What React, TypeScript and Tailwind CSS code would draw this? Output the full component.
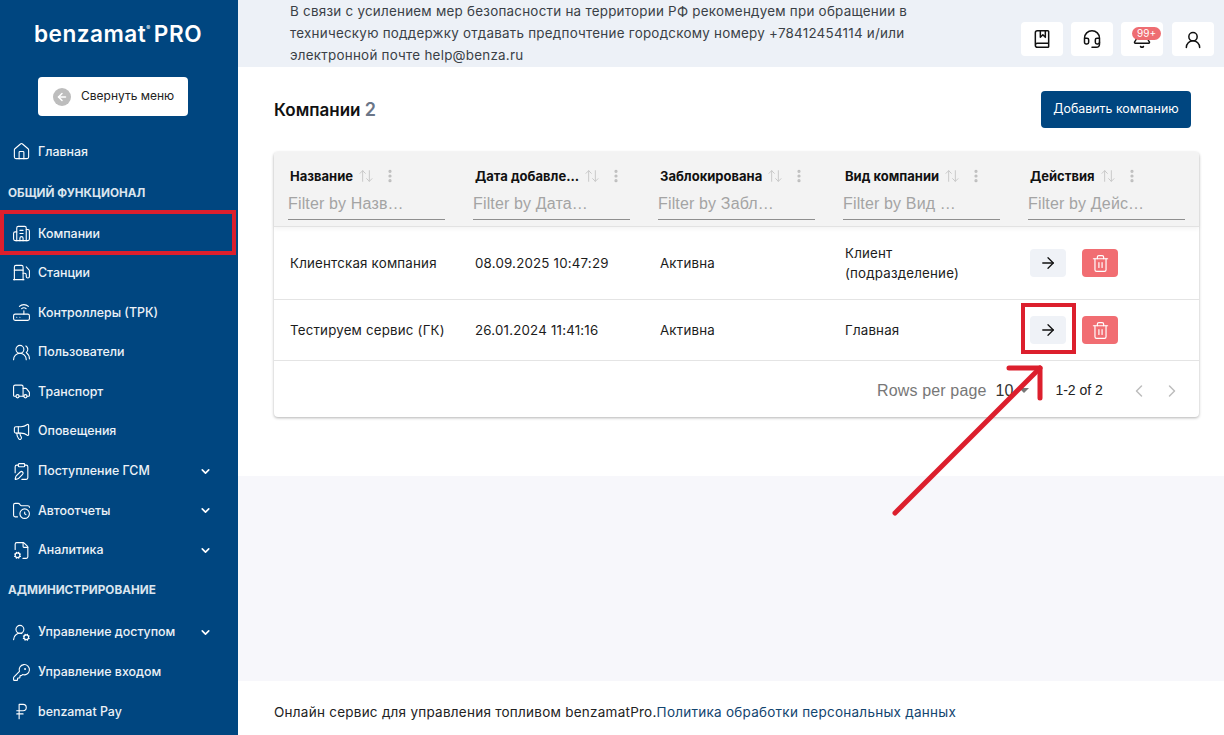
import React from "react";
import {
  Home, Building2, Fuel, Router, UsersRound, Truck, Megaphone, ClipboardPen, FolderClock, FileCog, UserRoundCog, KeyRound, RussianRuble,
  ChevronDown, ChevronLeft, ChevronRight, ArrowLeft, ArrowRight, BookMarked, Headset, Bell, UserRound, Trash2, EllipsisVertical, ArrowUpDown,
} from "lucide-react";

const F = "font-['Inter','Noto_Sans',sans-serif]";

function NavItem({ icon: I, label, chevron, y }: { icon: any; label: string; chevron?: boolean; y: string }) {
  return (
    <div className={`flex items-center pl-[12px] pr-[26px] ${y}`}>
      <I size={19} strokeWidth={1.4} className="shrink-0 text-white" />
      <span className="ml-[7px] flex-1 text-[12.4px] leading-[18px] font-medium text-[#edf2f7] whitespace-nowrap">{label}</span>
      {chevron && <ChevronDown size={13} strokeWidth={3} className="text-white" />}
    </div>
  );
}

function Section({ children, y }: { children: string; y: string }) {
  return <div className={`pl-[8px] text-[11.75px] leading-[16px] font-bold text-[#dbe5ee] whitespace-nowrap ${y}`}>{children}</div>;
}

function TopButton({ children, ml }: { children: React.ReactNode; ml: string }) {
  return <div className={`relative flex h-[34px] w-[42px] items-center justify-center rounded-[4px] bg-white ${ml}`}>{children}</div>;
}

function HeaderCell({ title }: { title: string }) {
  return (
    <div className="w-[185px] shrink-0 pl-[14px]">
      <div className="flex items-center h-[20px]">
        <span className="ml-[2px] text-[13px] font-bold text-[#111] leading-[20px] whitespace-nowrap">{title}</span>
        <ArrowUpDown size={16} strokeWidth={1.5} className="ml-[5px] text-[#c9c9c9]" />
        <EllipsisVertical size={16} strokeWidth={2.8} className="ml-[8px] text-[#bdbdbd]" />
      </div>
    </div>
  );
}

function FilterCell({ text }: { text: string }) {
  return (
    <div className="w-[185px] shrink-0 pl-[14px]">
      <div className="w-[157px] h-[28px] border-b border-[#8f8f8f] font-['Liberation_Sans',sans-serif] text-[16px] tracking-[0.15px] leading-[24px] text-[#a4a4a4] whitespace-nowrap overflow-hidden">{text}</div>
    </div>
  );
}

function Row({ cells, h, highlight }: { cells: React.ReactNode[]; h: string; highlight?: boolean }) {
  return (
    <div className={`flex items-center border-b border-[#e4e4e4] text-[13.3px] text-[#1c1c1c] ${h}`}>
      {cells.map((c, i) => (
        <div key={i} className="w-[185px] shrink-0 pl-[16px] leading-[20px] tracking-[0.2px]">{c}</div>
      ))}
      <div className="w-[185px] shrink-0 flex items-center gap-[16px] pl-[16px]">
        <div className="relative flex h-[28px] w-[36px] items-center justify-center rounded-[4px] bg-[#eff2f7]">
          <ArrowRight size={18} strokeWidth={1.7} className="text-[#111]" />
          {highlight && <div className="absolute left-[-9px] top-[-13px] h-[51px] w-[55px] border-[4px] border-[#dc1f2d]" />}
        </div>
        <div className="flex h-[28px] w-[36px] items-center justify-center rounded-[4px] bg-[#f16d72]">
          <Trash2 size={19} strokeWidth={1.5} className="text-white" />
        </div>
      </div>
    </div>
  );
}

export default function App() {
  return (
    <div className={`flex h-[735px] w-[1224px] overflow-hidden bg-white ${F}`}>
      <aside className="w-[238px] shrink-0 bg-[#004680] flex flex-col">
        <div className="mt-[20px] flex justify-center pr-[2px] text-[22.6px] leading-[28px] font-semibold text-white tracking-[0.5px]">
          benzamat<span className="text-[6px] leading-[16px]">®</span><span className="ml-[3px]">PRO</span>
        </div>
        <div className="mt-[29px] ml-[38px] flex h-[39px] w-[150px] items-center rounded-[4px] bg-white">
          <span className="ml-[15px] flex h-[18px] w-[18px] items-center justify-center rounded-full bg-[#bdbdbd]">
            <ArrowLeft size={12} strokeWidth={3} className="text-white" />
          </span>
          <span className="ml-[10px] -mt-[2px] text-[12px] text-[#222] whitespace-nowrap">Свернуть меню</span>
        </div>
        <NavItem icon={Home} label="Главная" y="mt-[26px]" />
        <Section y="mt-[24px]">ОБЩИЙ ФУНКЦИОНАЛ</Section>
        <div className="relative mt-[23px]">
          <NavItem icon={Building2} label="Компании" y="" />
          <div className="absolute left-0 top-[-14px] h-[45px] w-[236px] border-[4px] border-[#dc1f2d]" />
        </div>
        <NavItem icon={Fuel} label="Станции" y="mt-[20px]" />
        <NavItem icon={Router} label="Контроллеры (ТРК)" y="mt-[21px]" />
        <NavItem icon={UsersRound} label="Пользователи" y="mt-[20.67px]" />
        <NavItem icon={Truck} label="Транспорт" y="mt-[20.67px]" />
        <NavItem icon={Megaphone} label="Оповещения" y="mt-[20.67px]" />
        <NavItem icon={ClipboardPen} label="Поступление ГСМ" chevron y="mt-[20.67px]" />
        <NavItem icon={FolderClock} label="Автоотчеты" chevron y="mt-[20.67px]" />
        <NavItem icon={FileCog} label="Аналитика" chevron y="mt-[20.67px]" />
        <Section y="mt-[22px]">АДМИНИСТРИРОВАНИЕ</Section>
        <NavItem icon={UserRoundCog} label="Управление доступом" chevron y="mt-[25px]" />
        <NavItem icon={KeyRound} label="Управление входом" y="mt-[20.67px]" />
        <NavItem icon={RussianRuble} label="benzamat Pay" y="mt-[20.67px]" />
      </aside>

      <main className="relative flex-1 flex flex-col">
        <header className="h-[67px] shrink-0 bg-[#edf1f7] flex items-start pl-[52px]">
          <p className="w-[680px] text-[13.4px] leading-[22px] text-[#3a3f46] tracking-[0.25px]">
            В связи с усилением мер безопасности на территории РФ рекомендуем при обращении в техническую поддержку отдавать предпочтение городскому номеру +78412454114 и/или электронной почте help@benza.ru
          </p>
          <div className="ml-[51px] mt-[22px] flex">
            <TopButton ml=""><BookMarked size={20} strokeWidth={1.8} className="text-[#111]" /></TopButton>
            <TopButton ml="ml-[8px]"><Headset size={20} strokeWidth={1.8} className="text-[#111]" /></TopButton>
            <TopButton ml="ml-[8px]">
              <Bell size={20} strokeWidth={1.8} className="text-[#111]" />
              <span className="absolute left-[11px] top-[5px] flex h-[13px] w-[29px] items-center justify-center rounded-full bg-[#ee6d72] text-[10px] text-white">99+</span>
            </TopButton>
            <TopButton ml="ml-[9px]"><UserRound size={20} strokeWidth={1.8} className="text-[#111] mt-[2px]" /></TopButton>
          </div>
        </header>

        <section className="h-[409px] shrink-0 bg-white pl-[36px] pr-[25px]">
          <div className="flex items-center justify-between pt-[24px] h-[61px]">
            <h1 className="text-[17px] leading-[37px] font-semibold text-[#111] mt-[1px]">Компании <span className="text-[18px] text-[#6b7688]">2</span></h1>
            <div className="mr-[8px] flex h-[37px] w-[150px] items-center justify-center rounded-[4px] bg-[#004680] text-[12.4px] text-white">Добавить компанию</div>
          </div>

          <div className="mt-[24px] rounded-[4px] bg-white shadow-[0_1px_3px_rgba(0,0,0,0.3)]">
            <div className="h-[75px] rounded-t-[4px] bg-[#f3f3f3] border-b border-[#e2e2e2] shadow-[0_2px_4px_rgba(0,0,0,0.05)] pt-[14px]">
              <div className="flex">
                <HeaderCell title="Название" />
                <HeaderCell title="Дата добавле..." />
                <HeaderCell title="Заблокирована" />
                <HeaderCell title="Вид компании" />
                <HeaderCell title="Действия" />
              </div>
              <div className="flex mt-[6px]">
                <FilterCell text="Filter by Назв…" />
                <FilterCell text="Filter by Дата…" />
                <FilterCell text="Filter by Забл…" />
                <FilterCell text="Filter by Вид …" />
                <FilterCell text="Filter by Дейс…" />
              </div>
            </div>
            <Row h="h-[73px]" cells={["Клиентская компания", "08.09.2025 10:47:29", "Активна", <>Клиент<br />(подразделение)</>]} />
            <Row h="h-[61px]" highlight cells={["Тестируем сервис (ГК)", "26.01.2024 11:41:16", "Активна", "Главная"]} />
            <div className="flex h-[56px] items-center pt-[3px]">
              <span className="ml-[603px] font-['Liberation_Sans',sans-serif] text-[16px] tracking-[0.15px] text-[#777]">Rows per page</span>
              <span className="ml-[9px] font-['Liberation_Sans',sans-serif] text-[16px] text-[#333]">10</span>
              <span className="ml-[6px] h-0 w-0 border-x-[5px] border-t-[5px] border-x-transparent border-t-[#777]" />
              <span className="ml-[26px] font-['Liberation_Sans',sans-serif] text-[14px] text-[#222]">1-2 of 2</span>
              <ChevronLeft size={20} strokeWidth={1.8} className="ml-[26px] text-[#bdbdbd]" />
              <ChevronRight size={20} strokeWidth={1.8} className="ml-[13px] text-[#bdbdbd]" />
            </div>
          </div>
        </section>

        <div className="h-[205px] shrink-0 bg-[#f7f7fb]" />
        <footer className="flex-1 bg-white pl-[36px] pt-[22px] text-[13.5px] leading-[18px] tracking-[0.25px] text-[#222]">
          Онлайн сервис для управления топливом benzamatPro.<span className="text-[#12456f]">Политика обработки персональных данных</span>
        </footer>

        <svg className="absolute left-0 top-0 pointer-events-none" width="986" height="735" fill="none">
          <path d="M657 513 L802 368" stroke="#dc1f2d" strokeWidth="5" strokeLinecap="round" />
          <path d="M771 368 H802 V398" stroke="#dc1f2d" strokeWidth="5" strokeLinecap="round" strokeLinejoin="round" />
        </svg>
      </main>
    </div>
  );
}
